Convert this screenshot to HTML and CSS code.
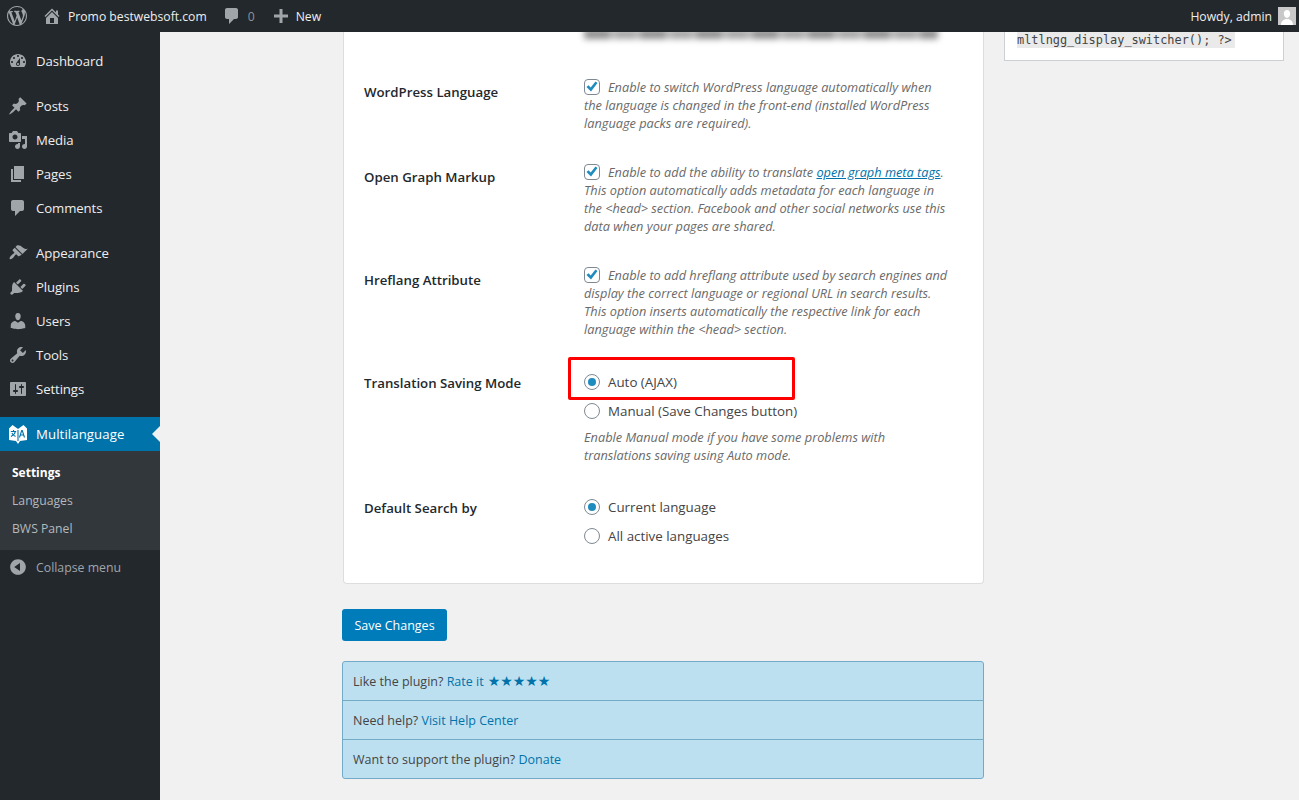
FILE: index.html
```html
<!DOCTYPE html>
<html lang="en">
<head>
<meta charset="utf-8">
<title>Multilanguage Settings</title>
<link rel="stylesheet" href="styles.css">
</head>
<body>
<header class="adminbar">
  <div class="bar-left">
    <svg class="bar-logo" viewBox="0 0 20 20"><path d="M20 10c0-5.51-4.49-10-10-10C4.48 0 0 4.49 0 10c0 5.52 4.48 10 10 10 5.51 0 10-4.48 10-10zM7.78 15.37L4.37 6.22c.55-.02 1.17-.08 1.17-.08.5-.06.44-1.13-.06-1.11 0 0-1.45.11-2.37.11-.18 0-.37 0-.58-.01C4.12 2.69 6.87 1.11 10 1.11c2.33 0 4.45.87 6.05 2.34-.68-.11-1.65.39-1.65 1.58 0 .74.45 1.36.9 2.1.35.61.55 1.36.55 2.46 0 1.49-1.4 5-1.4 5l-3.03-8.37c.54-.02.82-.17.82-.17.5-.05.44-1.25-.06-1.22 0 0-1.44.12-2.38.12-.87 0-2.33-.12-2.33-.12-.5-.03-.56 1.2-.06 1.22l.92.08 1.26 3.41zM17.41 10c.24-.64.74-1.87.43-4.25.7 1.29 1.05 2.71 1.05 4.25 0 3.29-1.73 6.24-4.4 7.78.97-2.59 1.94-5.2 2.92-7.78zM6.1 18.09C3.12 16.65 1.11 13.53 1.11 10c0-1.3.23-2.48.72-3.59C3.25 10.3 4.67 14.2 6.1 18.09zm4.03-6.63l2.58 6.98c-.86.29-1.76.45-2.71.45-.79 0-1.57-.11-2.29-.33.81-2.38 1.62-4.74 2.42-7.1z"/></svg>
    <span class="bar-item"><svg class="bar-icon" viewBox="0 0 20 20"><path fill-rule="evenodd" d="M16 8.5l1.53 1.53-1.06 1.06L10 4.62l-6.47 6.47-1.06-1.06L10 2.5l4 4v-2h2v4zm-6-2.46l6 5.99V18H4v-5.97zM12 17v-5H8v5h4z"/></svg>Promo bestwebsoft.com</span>
    <span class="bar-item"><svg class="bar-icon" viewBox="0 0 20 20"><path d="M5 2h9c1.1 0 2 .9 2 2v7c0 1.1-.9 2-2 2h-2l-5 5v-5H5c-1.1 0-2-.9-2-2V4c0-1.1.9-2 2-2z"/></svg><span class="bar-count">0</span></span>
    <span class="bar-item"><svg class="bar-icon" viewBox="0 0 20 20"><path d="M9.5 3h3v5.500H18v3h-5.500V17h-3v-5.500H4v-3h5.500z"/></svg>New</span>
  </div>
  <div class="bar-right">
    <span>Howdy, admin</span>
    <svg class="avatar" viewBox="0 0 18 18"><rect width="18" height="18" fill="#c8c8c8"/><path fill="#fff" d="M9 3c2 0 3.2 1.600 3.200 3.600S11 11 9 11 5.800 8.600 5.800 6.600 7 3 9 3zM3 18c0-3.500 2.500-6 6-6s6 2.500 6 6z"/></svg>
  </div>
</header>

<div class="layout">
  <nav class="sidebar">
    <ul class="menu">
      <li class="menu-item menu-gap"><svg class="menu-icon" viewBox="0 0 20 20"><path fill-rule="evenodd" d="M3.760 16h12.480c1.100-1.370 1.760-3.110 1.760-5 0-4.420-3.580-8-8-8s-8 3.580-8 8c0 1.890.660 3.630 1.760 5zM10 4c.55 0 1 .45 1 1s-.45 1-1 1-1-.45-1-1 .45-1 1-1zM6 6c.55 0 1 .45 1 1s-.45 1-1 1-1-.45-1-1 .45-1 1-1zm8 0c.55 0 1 .45 1 1s-.45 1-1 1-1-.45-1-1 .45-1 1-1zm-5.370 5.550L12 7v6c0 1.100-.9 2-2 2s-2-.9-2-2c0-.57.24-1.080.63-1.450zM4 10c.55 0 1 .45 1 1s-.45 1-1 1-1-.45-1-1 .45-1 1-1zm12 0c.55 0 1 .45 1 1s-.45 1-1 1-1-.45-1-1 .45-1 1-1zm-5 3c0-.55-.45-1-1-1s-1 .45-1 1 .45 1 1 1 1-.45 1-1z"/></svg>Dashboard</li>
      <li class="menu-item"><svg class="menu-icon" viewBox="0 0 20 20"><path d="M10.440 3.020l1.820-1.820 6.360 6.350-1.830 1.820c-1.050-.68-2.480-.57-3.410.36l-.75.75c-.92.93-1.040 2.350-.35 3.410l-1.830 1.820-2.410-2.410-2.800 2.790c-.42.42-3.380 2.710-3.800 2.290s1.860-3.390 2.280-3.810l2.790-2.790L4.100 9.360l1.830-1.820c1.050.69 2.480.57 3.400-.36l.75-.75c.93-.92 1.050-2.350.36-3.410z"/></svg>Posts</li>
      <li class="menu-item"><svg class="menu-icon" viewBox="0 0 20 20"><path fill-rule="evenodd" d="M13 11V4c0-.55-.45-1-1-1h-1.670L9 1H5L3.670 3H2c-.55 0-1 .45-1 1v7c0 .55.45 1 1 1h10c.55 0 1-.45 1-1zM7 4.500c1.380 0 2.500 1.120 2.500 2.500S8.380 9.500 7 9.500 4.500 8.380 4.500 7 5.620 4.500 7 4.500zM14 6h5v10.500c0 1.380-1.120 2.500-2.500 2.500S14 17.880 14 16.500s1.120-2.500 2.500-2.500c.17 0 .34.02.5.05V9h-3V6zm-4 8.050V13h2v3.500c0 1.380-1.120 2.500-2.500 2.500S7 17.880 7 16.500 8.120 14 9.500 14c.17 0 .34.02.5.05z"/></svg>Media</li>
      <li class="menu-item"><svg class="menu-icon" viewBox="0 0 20 20"><path d="M6 15V2h10v13H6zm-1 1h8v2H3V5h2v11z"/></svg>Pages</li>
      <li class="menu-item menu-gap"><svg class="menu-icon" viewBox="0 0 20 20"><path d="M5 2h9c1.100 0 2 .9 2 2v7c0 1.100-.9 2-2 2h-2l-5 5v-5H5c-1.100 0-2-.9-2-2V4c0-1.100.9-2 2-2z"/></svg>Comments</li>
      <li class="menu-item"><svg class="menu-icon" viewBox="0 0 20 20"><path d="M14.480 11.060L7.410 3.990l1.500-1.500c.5-.56 2.300-.47 3.510.32 1.210.8 1.430 1.280 2.910 2.100 1.180.64 2.450 1.260 4.450.85zm-.71.71L6.700 4.700 4.930 6.470c-.39.39-.39 1.020 0 1.410l1.060 1.060c.39.39.39 1.030 0 1.420-.6.6-1.430 1.110-2.210 1.690-.35.26-.7.53-1.010.84-.4.4-1.770 2.360-.98 3.150.79.79 2.750-.58 3.150-.98.31-.31.58-.66.84-1.010.58-.78 1.090-1.610 1.690-2.210.39-.39 1.030-.39 1.420 0l1.060 1.060c.39.39 1.020.39 1.410 0z"/></svg>Appearance</li>
      <li class="menu-item"><svg class="menu-icon" viewBox="0 0 20 20"><path d="M13.110 4.360L9.870 7.600 8 5.730l3.240-3.240c.35-.34 1.050-.2 1.560.32.52.51.66 1.210.31 1.550zm-8 1.770l.91-1.120 9.010 9.010-1.190.84c-.71.71-2.630 1.160-3.820 1.160H6.140L4.900 17.260c-.59.59-1.540.59-2.120 0-.59-.58-.59-1.530 0-2.120l1.240-1.240v-3.880c0-1.130.4-3.190 1.090-3.890zm7.260 3.970l3.240-3.240c.34-.35 1.040-.21 1.550.31.52.51.66 1.210.31 1.550l-3.240 3.250z"/></svg>Plugins</li>
      <li class="menu-item"><svg class="menu-icon" viewBox="0 0 20 20"><path d="M10 9.250c-2.270 0-2.730-3.440-2.730-3.440C7 4.020 7.820 2 9.970 2c2.160 0 2.980 2.020 2.710 3.810 0 0-.41 3.440-2.680 3.440zm0 2.570L12.720 10c2.390 0 4.520 2.330 4.520 4.530v2.490s-3.650 1.130-7.240 1.130c-3.650 0-7.240-1.130-7.240-1.130v-2.490c0-2.250 1.940-4.480 4.470-4.480z"/></svg>Users</li>
      <li class="menu-item"><svg class="menu-icon" viewBox="0 0 20 20"><path fill-rule="evenodd" d="M16.680 9.770c-1.340 1.340-3.300 1.670-4.950.99l-5.410 6.520c-.99.99-2.590.99-3.580 0s-.99-2.590 0-3.570l6.520-5.420c-.68-1.650-.35-3.610.99-4.950 1.280-1.280 3.120-1.620 4.720-1.060l-2.890 2.890 2.820 2.820 2.860-2.870c.53 1.580.18 3.390-1.080 4.650zM3.810 16.210c.4.39 1.040.39 1.430 0 .4-.4.4-1.040 0-1.430-.39-.4-1.030-.4-1.430 0-.39.39-.39 1.030 0 1.430z"/></svg>Tools</li>
      <li class="menu-item menu-gap"><svg class="menu-icon" viewBox="0 0 20 20"><path fill-rule="evenodd" d="M18 16V4c0-.55-.45-1-1-1H3c-.55 0-1 .45-1 1v12c0 .55.45 1 1 1h14c.55 0 1-.45 1-1zM8 11h1c.55 0 1 .45 1 1s-.45 1-1 1H8v1.500c0 .28-.22.5-.5.5s-.5-.22-.5-.5V13H6c-.55 0-1-.45-1-1s.45-1 1-1h1V5.500c0-.28.22-.5.5-.5s.5.22.5.5V11zm5-2h-1c-.55 0-1-.45-1-1s.45-1 1-1h1V5.500c0-.28.22-.5.5-.5s.5.22.5.5V7h1c.55 0 1 .45 1 1s-.45 1-1 1h-1v5.500c0 .28-.22.5-.5.5s-.5-.22-.5-.5V9z"/></svg>Settings</li>
      <li class="menu-item menu-current">
        <svg class="menu-icon" viewBox="0 0 20 20"><path fill="#fff" d="M1 4.500L4.500 1 10 5l5.500-4L19 4.500V16l-7 1-2 3-2-3-7-1z"/><path fill="none" stroke="#0073aa" stroke-width="1.100" d="M2.800 7.500h5.400M5.500 6v1.500M7.300 7.500c-.4 2.500-2.200 4-4.300 5M3.900 9c.8 1.500 2 2.700 3.600 3.500M11.500 13.500l2.200-7h.6l2.200 7M12.300 11h3.400M10 6v11"/></svg>Multilanguage
      </li>
    </ul>
    <ul class="submenu">
      <li class="submenu-item submenu-active">Settings</li>
      <li class="submenu-item">Languages</li>
      <li class="submenu-item">BWS Panel</li>
    </ul>
    <div class="collapse"><svg class="menu-icon" viewBox="0 0 20 20"><path fill-rule="evenodd" d="M10 2.160c4.330 0 7.840 3.510 7.840 7.840s-3.510 7.840-7.840 7.840S2.160 14.330 2.160 10 5.710 2.160 10 2.160zm2 11.720V6.120L6.180 9.970z"/></svg>Collapse menu</div>
  </nav>

  <main class="main">
    <div class="content">
      <section class="card">
        <div class="blur-line"></div>
        <div class="row row-lang">
          <div class="row-label">WordPress Language</div>
          <p class="row-field desc"><span class="check"><svg viewBox="0 0 14 14"><path d="M1.500 7l2-1.800 2.200 2.300 4.800-6 2 1.500-6.500 8.500z"/></svg></span>Enable to switch WordPress language automatically when<br>the language is changed in the front-end (installed WordPress<br>language packs are required).</p>
        </div>
        <div class="row">
          <div class="row-label">Open Graph Markup</div>
          <p class="row-field desc"><span class="check"><svg viewBox="0 0 14 14"><path d="M1.500 7l2-1.800 2.200 2.300 4.800-6 2 1.500-6.500 8.500z"/></svg></span>Enable to add the ability to translate <a class="link" href="#">open graph meta tags</a>.<br>This option automatically adds metadata for each language in<br>the &lt;head&gt; section. Facebook and other social networks use this<br>data when your pages are shared.</p>
        </div>
        <div class="row">
          <div class="row-label">Hreflang Attribute</div>
          <p class="row-field desc"><span class="check"><svg viewBox="0 0 14 14"><path d="M1.500 7l2-1.800 2.200 2.300 4.800-6 2 1.500-6.500 8.500z"/></svg></span>Enable to add hreflang attribute used by search engines and<br>display the correct language or regional URL in search results.<br>This option inserts automatically the respective link for each<br>language within the &lt;head&gt; section.</p>
        </div>
        <div class="row row-radio">
          <div class="row-label">Translation Saving Mode</div>
          <div class="row-field">
            <div class="radio-line"><span class="radio radio-on"></span>Auto (AJAX)</div>
            <div class="radio-line"><span class="radio"></span>Manual (Save Changes button)</div>
            <p class="desc desc-after">Enable Manual mode if you have some problems with<br>translations saving using Auto mode.</p>
          </div>
          <div class="highlight"></div>
        </div>
        <div class="row row-radio">
          <div class="row-label">Default Search by</div>
          <div class="row-field">
            <div class="radio-line"><span class="radio radio-on"></span>Current language</div>
            <div class="radio-line"><span class="radio"></span>All active languages</div>
          </div>
        </div>
      </section>
      <button class="save" type="button">Save Changes</button>
      <section class="notice">
        <div class="notice-row">Like the plugin? <a href="#">Rate it</a><span class="stars">★★★★★</span></div>
        <div class="notice-row">Need help? <a href="#">Visit Help Center</a></div>
        <div class="notice-row">Want to support the plugin? <a href="#">Donate</a></div>
      </section>
    </div>
    <aside class="side-card"><code class="code">mltlngg_display_switcher(); ?&gt;</code></aside>
  </main>
</div>
</body>
</html>
```
FILE: styles.css
```css
* { box-sizing: border-box; }
html, body { margin: 0; padding: 0; }
body {
  background: #f1f1f1;
  color: #444;
  font-family: "Open Sans", "Noto Sans", sans-serif;
  font-size: 13px;
  height: 800px;
  overflow: hidden;
}
ul { list-style: none; margin: 0; padding: 0; }
p { margin: 0; }

.adminbar {
  height: 32px;
  background: #23282d;
  color: #eee;
  display: flex;
  justify-content: space-between;
  align-items: center;
  padding: 0 0 0 7px;
  font-size: 12.180px;
}
.bar-left, .bar-right, .bar-item { display: flex; align-items: center; }
.bar-logo { width: 20px; height: 20px; fill: #a0a5aa; margin-right: 15px; }
.bar-icon { width: 20px; height: 20px; fill: #a0a5aa; margin-right: 6px; }
.bar-item { margin-right: 15px; }
.bar-count { color: #8f9397; }
.bar-right { padding-right: 3px; gap: 6px; }
.avatar { width: 18px; height: 18px; }

.layout { display: flex; height: 768px; }

.sidebar { width: 160px; background: #23282d; color: #eee; flex: none; }
.menu { padding-top: 12px; }
.menu-item {
  height: 34px;
  display: flex;
  align-items: center;
  padding-left: 8px;
  font-size: 13.200px;
  letter-spacing: -.1px;
}
.menu-gap { margin-bottom: 11px; }
.menu-icon { width: 20px; height: 20px; fill: #a0a5aa; margin-right: 8px; flex: none; }
.menu-current { background: #0073aa; color: #fff; position: relative; letter-spacing: .1px; }
.menu-current::after {
  content: "";
  position: absolute;
  right: 0;
  top: 9px;
  border: 8px solid transparent;
  border-right-color: #f1f1f1;
  border-left-width: 0;
}
.submenu { background: #32373c; padding: 7px 0 8px; }
.submenu-item {
  height: 28px;
  display: flex;
  align-items: center;
  padding-left: 12px;
  color: #b4b9be;
  font-size: 12.200px;
}
.submenu-active { color: #fff; font-weight: 700; font-size: 12px; }
.collapse {
  height: 34px;
  display: flex;
  align-items: center;
  padding-left: 8px;
  color: #a0a5aa;
  font-size: 12.300px;
}

.main {
  flex: 1;
  display: flex;
  align-items: flex-start;
  padding-left: 182px;
  min-width: 0;
}
.content { width: 642px; flex: none; }
.card {
  margin-left: 1px;
  width: 641px;
  height: 552px;
  background: #fff;
  border: 1px solid #ddd;
  border-top: 0;
  border-radius: 0 0 4px 4px;
  padding: 0 20px;
  overflow: hidden;
}
.blur-line {
  height: 10px;
  margin: 0 25px 0 220px;
  background: repeating-linear-gradient(90deg, #8f8f8f 0 26px, #c0c0c0 26px 31px, #a5a5a5 31px 52px, #c6c6c6 52px 56px);
  filter: blur(3px);
  transform: translateY(-3px);
}
.row { display: flex; margin-bottom: 31px; }
.row-lang { margin-top: 36px; }
.row-label {
  width: 220px;
  flex: none;
  font-size: 13.250px;
  font-weight: 600;
  color: #23282d;
  line-height: 18px;
  padding-top: 5px;
}
.row-field { flex: 1; }
.desc {
  font-size: 12.750px;
  font-style: italic;
  line-height: 18px;
  color: #6a6a6a;
  white-space: nowrap;
}
.desc-after { margin-top: 3px; }
.link { color: #0073aa; }
.check {
  display: inline-block;
  width: 16px;
  height: 16px;
  border: 1px solid #7e8993;
  border-radius: 4px;
  background: #fff;
  vertical-align: -3px;
  margin-right: 8px;
}
.check svg { display: block; width: 14px; height: 14px; fill: #1e8cbe; }
.radio-line {
  display: flex;
  align-items: center;
  height: 29px;
  font-size: 13.350px;
  color: #444;
}
.radio {
  width: 16px;
  height: 16px;
  border: 1px solid #7e8993;
  border-radius: 50%;
  background: #fff;
  margin-right: 8px;
  flex: none;
  position: relative;
}
.radio-on::after {
  content: "";
  position: absolute;
  left: 3px;
  top: 3px;
  width: 8px;
  height: 8px;
  border-radius: 50%;
  background: #1e8cbe;
}
.row-radio { position: relative; margin-top: -2px; }
.row-radio + .row-radio { margin-top: -3px; }
.row-radio .row-label { padding-top: 7px; }
.highlight {
  position: absolute;
  left: 204px;
  top: -10px;
  width: 227px;
  height: 43px;
  border: 3px solid #f00;
  border-radius: 2px;
  pointer-events: none;
}
.save {
  display: block;
  margin-top: 25px;
  width: 105px;
  height: 32px;
  background: #007cba;
  color: #fff;
  border: 0;
  border-radius: 3px;
  font: 12.500px "Open Sans", "Noto Sans", sans-serif;
  padding: 0;
}
.notice {
  margin-top: 20px;
  background: #bde0f0;
  border: 1px solid #72aac8;
  border-radius: 3px;
}
.notice-row {
  height: 39px;
  display: flex;
  align-items: center;
  padding-left: 10px;
  font-size: 12.500px;
  white-space: pre;
  color: #444;
}
.notice-row:first-child { height: 38px; }
.notice-row + .notice-row { border-top: 1px solid #72aac8; }
.notice a { color: #0073aa; text-decoration: none; }
.stars {
  color: #0073aa;
  font-family: "DejaVu Sans", sans-serif;
  font-size: 14px;
  line-height: 1;
  margin-left: 4px;
}

.side-card {
  margin-left: 20px;
  width: 280px;
  height: 29px;
  background: #fff;
  border: 1px solid #ccd0d4;
  border-top: 0;
  padding: 0 12px;
}
.code {
  display: block;
  width: fit-content;
  background: #eaeaea;
  font-family: "DejaVu Sans Mono", "Liberation Mono", monospace;
  font-size: 11.900px;
  line-height: 16px;
  color: #444;
  padding: 0 3px 0 0;
}
```
